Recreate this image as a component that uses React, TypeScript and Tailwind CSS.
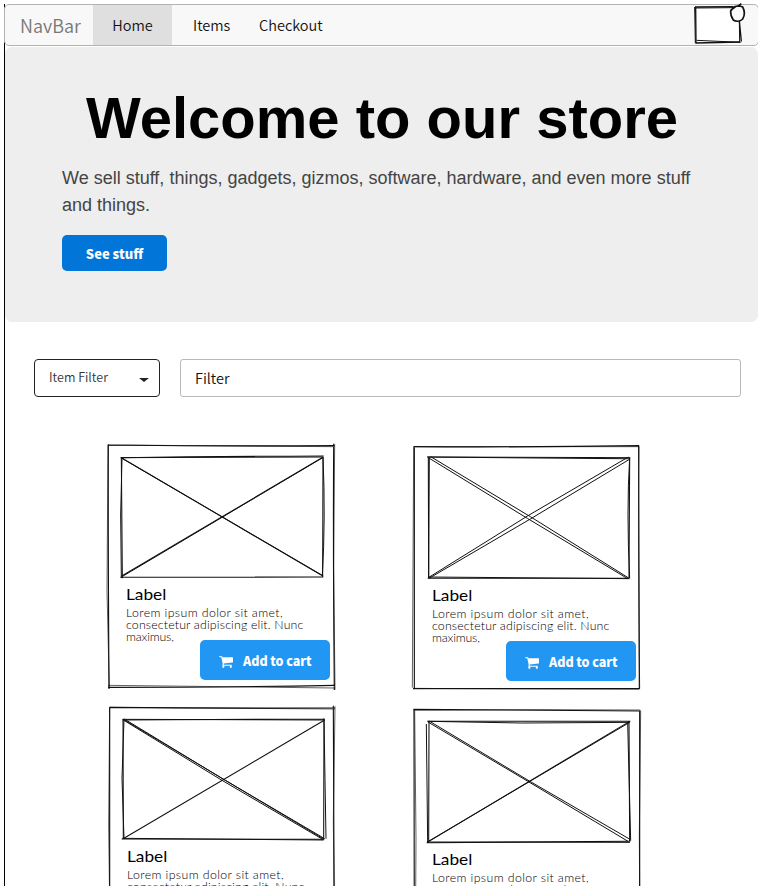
import React from "react";

const ui = "font-['Noto_Sans_CJK_SC','Noto_Sans',sans-serif]";
const hand = "font-[Lato,sans-serif]";

type Item = {
  inset: string;
  frame: string;
  frameThin: string;
  image: string;
  imageThin: string;
};

const items: Item[] = [
  {
    inset: "pl-[26px] pt-0",
    frame: "M24 30 Q360 34 704 32 M25 28 Q24 300 27 762 M701 26 Q699 350 703 765 M24 757 Q350 757 705 751",
    frameThin: "M24 30 L700 35 M24 30 L21 470 L28 758 M704 28 L701 400 L705 764 M24 751 L704 759",
    image: "M62 68 Q360 64 671 63 M64 66 L67 430 M669 64 L668 427 M61 427 L670 426 M64 68 L670 424 M64 424 L670 66",
    imageThin: "M62 68 L668 66 M66 68 L62 240 L64 428 M669 66 Q677 250 667 420 M66 70 L665 420 M66 425 L668 68",
  },
  {
    inset: "pl-[27px] pt-px",
    frame: "M26 35 Q360 37 702 32 M28 34 L28 760 M701 31 L703 762 M24 761 L704 760",
    frameThin: "M26 35 L702 35 M26 35 L22 758 M702 34 Q698 300 704 761 M24 760 L300 762 L703 763",
    image: "M67 66 Q360 69 674 71 M70 66 L71 430 M674 67 L672 430 M68 430 L671 430",
    imageThin: "M67 66 L674 68 M73 67 L71 429 M674 67 Q664 230 674 430 M70 426 L673 431 M77 65 L376 245 L671 429 M70 68 L367 250 L668 431 M70 428 L369 242 L670 66 M72 430 L376 252 L675 72",
  },
  {
    inset: "pl-[27px] pt-[2px]",
    frame: "M28 37 Q360 40 705 39 M29 37 L29 780 M700 32 L703 780",
    frameThin: "M29 37 L704 42 M29 37 L26 390 L31 780 M705 34 L700 380 L705 780",
    image: "M67 75 L673 72 M69 72 L70 432 M672 70 L671 434 M65 432 L673 433 M68 432 L674 75",
    imageThin: "M68 73 L674 75 M72 72 L66 250 L72 431 M672 72 Q675 260 678 431 M68 430 L671 435 M73 72 L369 252 L674 431 M70 75 L366 256 L668 433 M70 73 L671 432",
  },
  {
    inset: "pl-[27px] pt-[5px]",
    frame: "M25 43 Q360 44 706 48 M27 43 L28 780 M704 47 L704 780",
    frameThin: "M25 46 L400 44 L706 45 M29 43 L33 430 L31 780 M707 47 L703 420 L705 780",
    image: "M67 79 L676 79 M72 80 L71 441 M672 79 L674 438 M65 443 L676 439 M67 442 L674 79",
    imageThin: "M68 79 L350 84 L674 82 M64 87 L68 441 M668 82 L677 437 M66 441 L675 442 M74 79 L373 258 L675 433 M69 81 L372 261 L669 439 M70 439 L674 82",
  },
];

function CartIcon() {
  return (
    <svg className="mr-[10px] h-[15px] w-[14px] shrink-0" viewBox="0 0 1664 1792" fill="currentColor">
      <path d="M640 1536q0 52-38 90t-90 38-90-38-38-90 38-90 90-38 90 38 38 90zm896 0q0 52-38 90t-90 38-90-38-38-90 38-90 90-38 90 38 38 90zm128-1088v512q0 24-16.500 42.500t-40.500 21.500l-1044 122q13 60 13 70 0 16-24 64h920q26 0 45 19t19 45-19 45-45 19h-1024q-26 0-45-19t-19-45q0-11 8-31.500t16-36 21.500-40 15.500-29.500l-177-823h-204q-26 0-45-19t-19-45 19-45 45-19h256q16 0 28.500 6.500t19.500 15.500 13 24.500 8 26 5.500 29.500 4.500 26h1201q26 0 45 19t19 45z" />
    </svg>
  );
}

function ItemCard({ item }: { item: Item }) {
  return (
    <article className="relative h-[260px] w-[245px]">
      <svg className="absolute inset-0 h-[260px] w-[245px]" viewBox="0 0 735 780" fill="none" stroke="#111">
        <path d={item.frame} strokeWidth="3.4" />
        <path d={item.frameThin} strokeWidth="2" />
      </svg>
      <svg className="block h-[150px] w-[245px]" viewBox="0 0 735 450" fill="none" stroke="#111">
        <path d={item.image} strokeWidth="3.2" />
        <path d={item.imageThin} strokeWidth="3" />
      </svg>
      <div className={`${hand} ${item.inset} relative text-black`}>
        <h2 className="h-[22px] origin-left scale-x-[1.15] text-[15px] font-normal leading-[19px]">Label</h2>
        <p className="w-max origin-left scale-x-[1.12] text-[11px] font-light leading-[12px]">
          <span className="block tracking-[0.35px]">Lorem ipsum dolor sit amet,</span>
          <span className="block tracking-[0.15px]">consectetur adipiscing elit. Nunc</span>
          <span className="block tracking-[-0.15px]">maximus,</span>
        </p>
        <button
          className={`${ui} relative -mt-[3px] ml-[74px] flex h-10 w-[130px] items-center rounded-[5px] bg-[#2196f3] pl-[19px] pt-[2px] text-[12.5px] font-black text-white`}
        >
          <CartIcon />
          <span className="whitespace-nowrap tracking-[-0.05px]">Add to cart</span>
        </button>
      </div>
    </article>
  );
}

function CartSketch() {
  return (
    <svg className="ml-auto h-[42px] w-[78px] shrink-0 overflow-visible" viewBox="0 12 234 126" fill="none" stroke="#111">
      <path d="M46 21 L179 21 L179 127 L47 128 Z" fill="#fff" stroke="none" />
      <path d="M45 21 L160 20 M47 21 L48 130 M178 62 L184 125 M46 129 L180 126" strokeWidth="4" />
      <path d="M44 24 L160 23 M44 21 L46 129 M178 63 L179 127 M50 121 L182 127" strokeWidth="3" />
      <path
        d="M160 22 C166 17 180 17 188 21 C194 32 194 47 188 57 C180 66 166 65 160 60 C154 51 151 44 152 34 Z M172 20 L184 11 M151 32 L168 19"
        fill="#fafafa"
        strokeWidth="5"
      />
    </svg>
  );
}

export default function App() {
  return (
    <div className="h-[886px] w-[758px] overflow-hidden bg-white pl-1 pt-1">
      <div className="h-[882px] border-l border-black">
        <nav className={`${ui} -ml-px flex h-[42px] w-[755px] items-center rounded-[5px] border border-[#b3b3b3] bg-[#f8f8f8] text-[14.5px] font-[350] text-[#111]`}>
          <span className="w-[88px] pl-[15px] text-[18px] text-[#777]">NavBar</span>
          <a className="flex h-full w-[79px] items-center justify-center bg-[#dfdfdf]">Home</a>
          <a className="ml-[21px] w-[66px]">Items</a>
          <a>Checkout</a>
          <CartSketch />
        </nav>
        <header className="mt-px h-[275px] rounded-[7px] bg-[#eee] px-[57px] pt-[37px] font-['Liberation_Sans',Arial,sans-serif]">
          <h1 className="-mx-5 whitespace-nowrap pl-px text-center text-[58px] font-bold leading-[68px] text-black">Welcome to our store</h1>
          <p className="mt-[13px] whitespace-nowrap text-[18px] leading-[27px] text-[#444]">
            We sell stuff, things, gadgets, gizmos, software, hardware, and even more stuff
            <br />
            and things.
          </p>
          <button className={`${ui} mt-[16px] flex h-9 w-[105px] items-center justify-center rounded-[5px] bg-[#0275d8] pt-[2px] text-[13px] font-black text-white`}>
            See stuff
          </button>
        </header>
        <section className={`${ui} mt-[37px] flex gap-5 pl-[29px] font-[350]`}>
          <button className="flex h-[38px] w-[126px] items-center justify-between rounded-[4px] border border-[#222] pb-px pl-[14px] pr-[10px] text-[12.5px] text-[#333]">
            <span>Item Filter</span>
            <span className="mt-[4px] h-0 w-0 border-x-[5px] border-t-[4px] border-x-transparent border-t-[#222]" />
          </button>
          <div className="flex h-[38px] w-[561px] items-center rounded-[3px] border border-[#b9b9b9] pb-px pl-[14px] text-[14.5px] text-[#111]">Filter</div>
        </section>
        <main className="ml-[95px] mt-[38px] grid grid-cols-[245px_245px] gap-x-[60px]">
          {items.map((item, i) => (
            <ItemCard key={i} item={item} />
          ))}
        </main>
      </div>
    </div>
  );
}
